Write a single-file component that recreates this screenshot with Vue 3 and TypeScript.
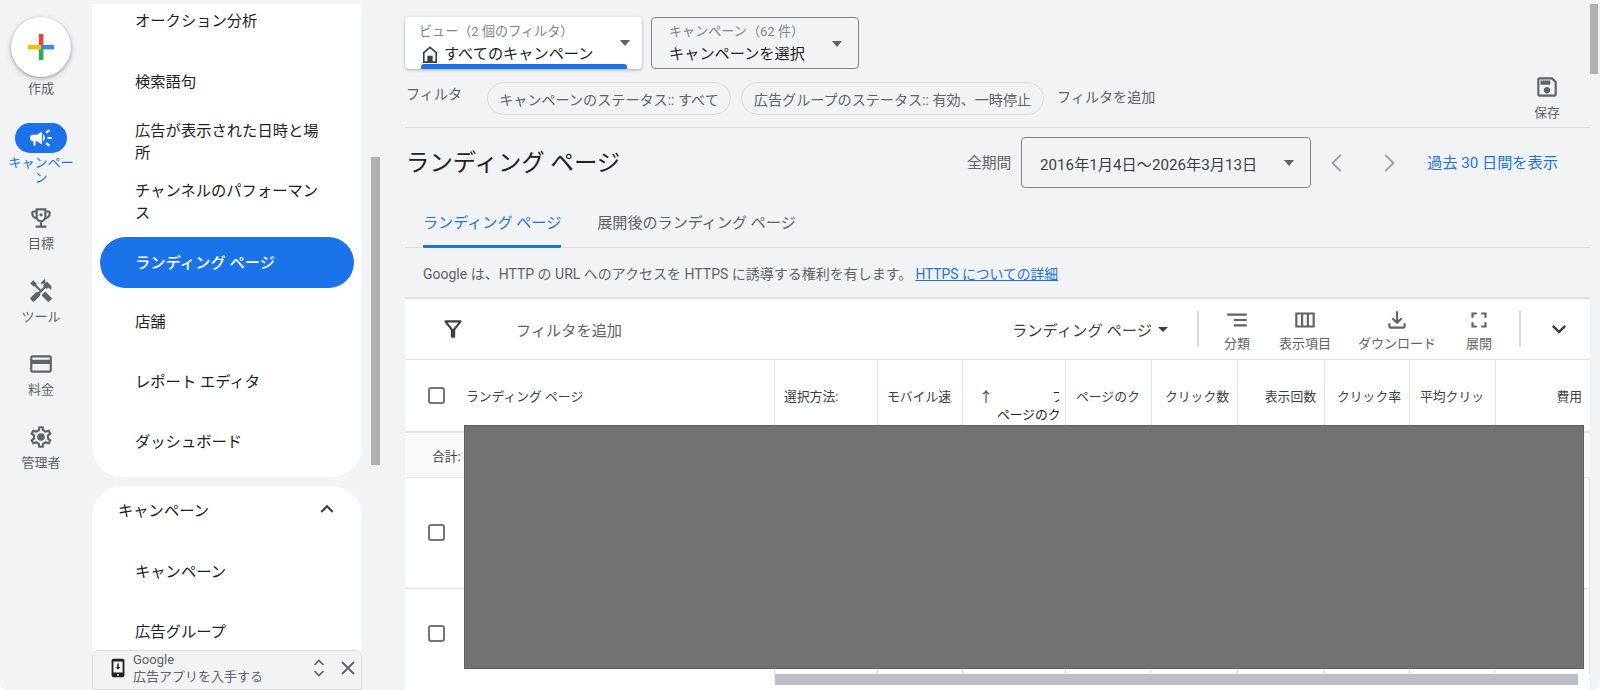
<script setup lang="ts">
interface RailItem { label: string; paths: string[] }
const railItems: RailItem[] = [
  { label: '目標', paths: ['M19 5h-2V3H7v2H5c-1.1 0-2 .9-2 2v1c0 2.55 1.92 4.63 4.39 4.94.63 1.5 1.98 2.63 3.61 2.96V19H7v2h10v-2h-4v-3.1c1.63-.33 2.98-1.46 3.61-2.96C19.08 12.63 21 10.55 21 8V7c0-1.1-.9-2-2-2zM5 8V7h2v3.82C5.84 10.4 5 9.3 5 8zm7 6c-1.65 0-3-1.35-3-3V5h6v6c0 1.65-1.35 3-3 3zm7-6c0 1.3-.84 2.4-2 2.82V7h2v1z', 'M12 7.5a1.5 1.5 0 1 0 0 3 1.5 1.5 0 0 0 0-3z'] },
  { label: 'ツール', paths: ['M21.67 18.17l-5.3-5.3h-.99l-2.54 2.54v.99l5.3 5.3c.39.39 1.02.39 1.41 0l2.12-2.12c.39-.38.39-1.02 0-1.41z', 'M17.34 10.19l1.41-1.41 2.12 2.12c1.17-1.17 1.17-3.07 0-4.24l-3.54-3.54-1.41 1.41V1.71l-.7-.71-3.54 3.54.71.71h2.83l-1.41 1.41 1.06 1.06-2.89 2.89-4.13-4.13V5.06L4.83 2.04 2 4.87 5.03 7.9h1.41l4.13 4.13-.85.85H7.61l-5.3 5.3c-.39.39-.39 1.02 0 1.41l2.12 2.12c.39.39 1.02.39 1.41 0l5.3-5.3v-2.12l5.15-5.15 1.05 1.05z'] },
  { label: '料金', paths: ['M20 4H4c-1.11 0-1.99.89-1.99 2L2 18c0 1.11.89 2 2 2h16c1.11 0 2-.89 2-2V6c0-1.11-.89-2-2-2zm0 14H4v-6h16v6zm0-10H4V6h16v2z'] },
  { label: '管理者', paths: ['M19.43 12.98c.04-.32.07-.64.07-.98 0-.34-.03-.66-.07-.98l2.11-1.65c.19-.15.24-.42.12-.64l-2-3.46c-.09-.16-.26-.25-.44-.25-.06 0-.12.01-.17.03l-2.49 1c-.52-.4-1.08-.73-1.69-.98l-.38-2.65C14.46 2.18 14.25 2 14 2h-4c-.25 0-.46.18-.49.42l-.38 2.65c-.61.25-1.17.59-1.69.98l-2.49-1c-.06-.02-.12-.03-.18-.03-.17 0-.34.09-.43.25l-2 3.46c-.13.22-.07.49.12.64l2.11 1.65c-.04.32-.07.65-.07.98 0 .33.03.66.07.98l-2.11 1.65c-.19.15-.24.42-.12.64l2 3.46c.09.16.26.25.44.25.06 0 .12-.01.17-.03l2.49-1c.52.4 1.08.73 1.69.98l.38 2.65c.03.24.24.42.49.42h4c.25 0 .46-.18.49-.42l.38-2.65c.61-.25 1.17-.59 1.69-.98l2.49 1c.06.02.12.03.18.03.17 0 .34-.09.43-.25l2-3.46c.12-.22.07-.49-.12-.64l-2.11-1.65zm-1.98-1.71c.04.31.05.52.05.73 0 .21-.02.43-.05.73l-.14 1.13.89.7 1.08.84-.7 1.21-1.27-.51-1.04-.42-.9.68c-.43.32-.84.56-1.25.73l-1.06.43-.16 1.13-.2 1.35h-1.4l-.19-1.35-.16-1.13-1.06-.43c-.43-.18-.83-.41-1.23-.71l-.91-.7-1.06.43-1.27.51-.7-1.21 1.08-.84.89-.7-.14-1.13c-.03-.31-.05-.54-.05-.74s.02-.43.05-.73l.14-1.13-.89-.7-1.08-.84.7-1.21 1.27.51 1.04.42.9-.68c.43-.32.84-.56 1.25-.73l1.06-.43.16-1.13.2-1.35h1.39l.19 1.35.16 1.13 1.06.43c.43.18.83.41 1.23.71l.91.7 1.06-.43 1.27-.51.7 1.21-1.07.85-.89.7.14 1.13z', 'M12 8.5a3.5 3.5 0 1 0 0 7 3.5 3.5 0 0 0 0-7z'] },
]
interface NavItem { label: string; active?: boolean }
const navTop: NavItem[] = [
  { label: '検索語句' },
  { label: '広告が表示された日時と場所' },
  { label: 'チャンネルのパフォーマンス' },
  { label: 'ランディング ページ', active: true },
  { label: '店舗' },
  { label: 'レポート エディタ' },
  { label: 'ダッシュボード' },
]
const tools = [
  { label: '分類', cls: 't1', path: 'M9 18h12v-2H9v2zM3 6v2h18V6H3zm6 7h12v-2H9v2z' },
  { label: '表示項目', cls: 't2', path: 'M3 5v14h18V5H3zm5.33 12H5V7h3.33v10zm5.34 0h-3.33V7h3.33v10zM19 17h-3.33V7H19v10z' },
  { label: 'ダウンロード', cls: 't3', path: 'M18 15v3H6v-3H4v3c0 1.1.9 2 2 2h12c1.1 0 2-.9 2-2v-3h-2zm-1-4l-1.41-1.41L13 12.17V4h-2v8.17L8.41 9.59 7 11l5 5 5-5z' },
  { label: '展開', cls: 't4', path: 'M7 14H5v5h5v-2H7v-3zm-2-4h2V7h3V5H5v5zm12 7h-3v2h5v-5h-2v3zM14 5v2h3v3h2V5h-5z' },
]
const numCols: string[] = ['クリック数', '表示回数', 'クリック率']
const rowClasses: string[] = ['row-a', 'row-b']
const emptyCells: number[] = [1, 2, 3, 4, 5, 6, 7, 8, 9]
</script>

<template>
  <div class="page">
    <aside class="rail">
      <button class="fab" aria-label="作成">
        <svg width="26" height="26" viewBox="0 0 26 26">
          <rect x="10.8" y="0" width="4.6" height="13" fill="#ea4335" />
          <rect x="13" y="10.8" width="13" height="4.6" fill="#4285f4" />
          <rect x="10.8" y="13" width="4.6" height="13" fill="#34a853" />
          <rect x="0" y="10.8" width="13" height="4.6" fill="#fbbc04" />
        </svg>
      </button>
      <div class="rail-label create">作成</div>
      <div class="rail-pill">
        <svg width="26" height="26" viewBox="0 0 24 24" fill="#fff"><path d="M18 11v2h4v-2h-4zm-2 6.61c.96.71 2.21 1.65 3.2 2.39.4-.53.8-1.07 1.2-1.6-.99-.74-2.24-1.68-3.2-2.4-.4.54-.8 1.08-1.2 1.61zM20.4 5.6c-.4-.53-.8-1.07-1.2-1.6-.99.74-2.24 1.68-3.2 2.4.4.53.8 1.07 1.2 1.6.96-.72 2.21-1.65 3.2-2.4zM4 9c-1.1 0-2 .9-2 2v2c0 1.1.9 2 2 2h1v4h2v-4h1l5 3V6L8 9H4zm11.5 3c0-1.33-.58-2.53-1.5-3.35v6.69c.92-.81 1.5-2.01 1.5-3.34z" /></svg>
      </div>
      <div class="rail-label active-label">キャンペーン</div>
      <div v-for="item in railItems" :key="item.label" class="rail-item">
        <svg width="26" height="26" viewBox="0 0 24 24" fill="#5f6368"><path v-for="d in item.paths" :key="d" :d="d" /></svg>
        <div class="rail-label">{{ item.label }}</div>
      </div>
    </aside>

    <div class="nav">
      <div class="panel top-panel">
        <div class="nav-item first-item"><span>オークション分析</span></div>
        <div v-for="n in navTop" :key="n.label" class="nav-item" :class="{ active: n.active }">
          <span>{{ n.label }}</span>
        </div>
      </div>
      <div class="panel bottom-panel">
        <div class="group-head">
          <span>キャンペーン</span>
          <svg width="26" height="26" viewBox="0 0 24 24" fill="#3c4043"><path d="M12 8l-6 6 1.41 1.41L12 10.83l4.59 4.58L18 14z" /></svg>
        </div>
        <div class="nav-item"><span>キャンペーン</span></div>
        <div class="nav-item"><span>広告グループ</span></div>
      </div>
      <div class="nav-thumb"></div>
      <div class="app-bar">
        <svg class="phone" width="22" height="22" viewBox="0 0 24 24" fill="#202124"><path d="M17 2H7c-1.1 0-2 .9-2 2v16c0 1.1.9 2 2 2h10c1.1 0 2-.9 2-2V4c0-1.1-.9-2-2-2zm0 15H7V5h10v12zm-5 3.6a1 1 0 1 1 0-2 1 1 0 0 1 0 2zM11.2 7h1.6v4h1.7L12 14l-2.5-3h1.7z" /></svg>
        <div class="app-text"><div>Google</div><div>広告アプリを入手する</div></div>
        <svg class="unfold" width="20" height="24" viewBox="0 0 20 24" fill="none" stroke="#5f6368" stroke-width="1.7"><path d="M5.5 9l4.5-4.5L14.500 9M5.500 15l4.500 4.500 4.500-4.500" /></svg>
        <svg class="close" width="20" height="20" viewBox="0 0 20 20" fill="none" stroke="#5f6368" stroke-width="1.8"><path d="M4 4l12 12M16 4L4 16" /></svg>
      </div>
    </div>

    <main class="main">
      <section class="top">
        <div class="top-left">
          <div class="pickers">
            <div class="picker view-picker">
              <div class="picker-label">ビュー（2 個のフィルタ）</div>
              <div class="picker-value">
                <svg width="16" height="17" viewBox="0 0 18 19" fill="none" stroke="#3c4043" stroke-width="1.9"><path d="M2 18V7.5L9 1.5l7 6V18z" /><path d="M6 18v-7h6v7" fill="#3c4043" stroke="none" /></svg>
                <span>すべてのキャンペーン</span>
              </div>
              <i class="caret picker-caret"></i>
              <div class="view-bar"></div>
            </div>
            <div class="picker camp-picker">
              <div class="picker-label">キャンペーン（62 件）</div>
              <div class="picker-value">キャンペーンを選択</div>
              <i class="caret picker-caret"></i>
            </div>
          </div>
          <div class="filters">
            <span class="filter-title">フィルタ</span>
            <span class="chip chip-a">キャンペーンのステータス:: すべて</span>
            <span class="chip chip-b">広告グループのステータス:: 有効、一時停止</span>
            <span class="add-filter">フィルタを追加</span>
          </div>
        </div>
        <div class="save">
          <svg width="26" height="26" viewBox="0 0 24 24" fill="#5f6368"><path d="M17 3H5c-1.11 0-2 .9-2 2v14c0 1.1.89 2 2 2h14c1.1 0 2-.9 2-2V7l-4-4zm2 16H5V5h11.17L19 7.83V19zm-7-7c-1.66 0-3 1.34-3 3s1.34 3 3 3 3-1.34 3-3-1.34-3-3-3zM6 6h9v4H6z" /></svg>
          <span>保存</span>
        </div>
      </section>

      <section class="title-row">
        <h1>ランディング ページ</h1>
        <span class="period">全期間</span>
        <div class="date-box">
          <span>2016年1月4日〜2026年3月13日</span>
          <i class="caret"></i>
        </div>
        <svg class="arrow arrow-l" width="24" height="24" viewBox="0 0 24 24" fill="#9aa0a6"><path d="M15.4 4.6L14 3.2 5.2 12l8.8 8.8 1.4-1.4L8 12z" /></svg>
        <svg class="arrow arrow-r" width="24" height="24" viewBox="0 0 24 24" fill="#9aa0a6"><path d="M8.6 4.6L10 3.2l8.8 8.8-8.8 8.8-1.4-1.4L16 12z" /></svg>
        <span class="last30">過去 30 日間を表示</span>
      </section>

      <nav class="tabs">
        <span class="tab tab-on">ランディング ページ</span>
        <span class="tab">展開後のランディング ページ</span>
      </nav>

      <p class="notice">
        <span>Google は、HTTP の URL へのアクセスを HTTPS に誘導する権利を有します。</span>
        <a>HTTPS についての詳細</a>
      </p>

      <section class="table-card">
        <div class="toolbar">
          <svg class="funnel" width="26" height="26" viewBox="0 0 24 24" fill="#3c4043"><path d="M7 6h10l-5.01 6.3L7 6zm-2.75-.39C6.27 8.2 10 13 10 13v6c0 .55.45 1 1 1h2c.55 0 1-.45 1-1v-6s3.72-4.8 5.74-7.39c.51-.66.04-1.61-.79-1.61H5.04c-.83 0-1.3.95-.79 1.61z" /></svg>
          <span class="tb-filter">フィルタを追加</span>
          <span class="tb-select">ランディング ページ<i class="caret"></i></span>
          <span class="tb-div"></span>
          <div v-for="t in tools" :key="t.label" class="tool" :class="t.cls">
            <svg width="26" height="26" viewBox="0 0 24 24" fill="#5f6368"><path :d="t.path" /></svg>
            <span>{{ t.label }}</span>
          </div>
          <span class="tb-div second"></span>
          <svg class="tb-chev" width="28" height="28" viewBox="0 0 24 24" fill="#3c4043"><path d="M7.41 8.59L12 13.170l4.590-4.580L18 10l-6 6-6-6z" /></svg>
        </div>

        <div class="grid head">
          <div class="cell first-cell"><span class="check"></span><span>ランディング ページ</span></div>
          <div class="cell">選択方法:</div>
          <div class="cell"><span class="clip clip-m">モバイル速度スコア</span></div>
          <div class="cell sort">
            <div class="sort-top"><span class="up">↑</span><span class="sort-clip">フ</span></div>
            <div class="sort-bottom"><span>ページのクリック</span></div>
          </div>
          <div class="cell"><span class="clip clip-p">ページのクリック</span></div>
          <div v-for="c in numCols" :key="c" class="cell num">{{ c }}</div>
          <div class="cell"><span class="clip clip-a">平均クリック単価</span></div>
          <div class="cell num last-cell">費用</div>
        </div>

        <div class="grid total">
          <div class="cell total-cell">合計:</div>
        </div>

        <div v-for="r in rowClasses" :key="r" class="grid data" :class="r">
          <div class="cell first-cell"><span class="check"></span></div>
          <div v-for="e in emptyCells" :key="e" class="cell"></div>
        </div>
      </section>

      <div class="redaction"></div>
      <div class="h-thumb"></div>
    </main>

    <div class="page-scroll"><div class="page-thumb"></div></div>
  </div>
</template>

<style>
html, body { margin: 0; background: #fff; }
</style>

<style scoped>
* { box-sizing: border-box; }
.page {
  display: flex;
  width: 1600px;
  height: 690px;
  overflow: hidden;
  background: #f1f3f5;
  border-radius: 0 0 8px 8px;
  font-family: Roboto, "Noto Sans CJK JP", sans-serif;
  color: #202124;
}

.rail { width: 92px; flex: none; display: flex; flex-direction: column; align-items: center; padding-top: 17px; padding-right: 10px; }
.fab { width: 60px; height: 60px; flex: none; border: 0; padding: 0; border-radius: 50%; background: #fff; box-shadow: 0 1px 3px rgba(60,64,67,.4), 0 2px 6px rgba(60,64,67,.2); display: flex; align-items: center; justify-content: center; }
.rail-label { font-size: 13px; line-height: 16px; color: #5f6368; text-align: center; }
.create { margin-top: 4px; }
.rail-pill { width: 52px; height: 30px; flex: none; margin-top: 26px; border-radius: 15px; background: #1a73e8; display: flex; align-items: center; justify-content: center; }
.active-label { width: 66px; margin-top: 2px; line-height: 15px; color: #1a73e8; margin-bottom: 20px; }
.rail-item { height: 73px; flex: none; display: flex; flex-direction: column; align-items: center; gap: 5px; }
.rail-item svg { display: block; }

.nav { width: 313px; flex: none; position: relative; }
.panel { width: 270px; background: #fff; overflow: hidden; }
.top-panel { margin-top: 4px; height: 473px; border-radius: 0 0 30px 30px; }
.bottom-panel { margin-top: 9px; height: 204px; border-radius: 30px 30px 0 0; }
.nav-item { height: 60px; padding: 0 36px 0 43px; display: flex; align-items: center; font-size: 15.3px; line-height: 22px; color: #202124; }
.first-item { height: 48px; align-items: flex-start; padding-top: 6px; }
.nav-item.active { height: 51px; margin: 5px 8px 4px; padding: 0 35px; border-radius: 26px; background: #1a73e8; color: #fff; font-weight: 500; }
.group-head { height: 56px; padding: 0 22px 10px 26px; display: flex; align-items: center; justify-content: space-between; font-size: 15.3px; }
.nav-thumb { position: absolute; left: 279px; top: 157px; width: 9px; height: 308px; background: #b0b0b0; }
.app-bar { position: absolute; left: 0; top: 650px; width: 270px; height: 40px; background: #f1f3f4; border: 1px solid #dadce0; border-radius: 6px 6px 0 0; display: flex; align-items: center; font-size: 13px; line-height: 17px; color: #5f6368; padding: 0 0 5px 14px; }
.phone { flex: none; }
.app-text { margin-left: 4px; width: 176px; }
.unfold { flex: none; }
.close { flex: none; margin-left: 9px; }

.main { width: 1185px; flex: none; position: relative; display: flex; flex-direction: column; }
.top { height: 128px; flex: none; border-bottom: 1px solid #dadce0; display: flex; justify-content: space-between; }
.pickers { display: flex; gap: 9px; margin-top: 17px; }
.picker { position: relative; height: 52px; border-radius: 4px; overflow: hidden; }
.view-picker { width: 237px; background: #fff; box-shadow: 0 1px 3px rgba(60,64,67,.4); padding: 6px 0 0 14px; }
.camp-picker { width: 208px; border: 1px solid #80868b; padding: 5px 0 0 17px; }
.picker-label { font-size: 13.1px; line-height: 18px; color: #80868b; }
.picker-value { display: flex; align-items: center; gap: 6px; font-size: 15.2px; line-height: 22px; margin-top: 2px; color: #202124; }
.view-picker .picker-value { margin-left: 3px; }
.caret { display: block; width: 0; height: 0; border-left: 5.5px solid transparent; border-right: 5.5px solid transparent; border-top: 6px solid #5f6368; }
.picker-caret { position: absolute; top: 23px; right: 12px; }
.camp-picker .picker-caret { right: 16px; }
.view-bar { position: absolute; left: 16px; bottom: 0; width: 206px; height: 5px; background: #1a73e8; border-radius: 3px 3px 0 0; }

.filters { display: flex; align-items: flex-start; margin-top: 13px; font-size: 14.1px; color: #5f6368; }
.filter-title { width: 82px; padding-left: 1px; line-height: 24px; }
.chip { height: 33px; border: 1px solid #dadce0; border-radius: 17px; display: flex; align-items: center; justify-content: center; white-space: nowrap; }
.chip-a { width: 244px; }
.chip-b { width: 303px; margin-left: 10px; }
.add-filter { margin-left: 13px; line-height: 30px; color: #5f6368; }
.save { align-self: flex-end; width: 40px; margin-right: 23px; padding-bottom: 6px; display: flex; flex-direction: column; align-items: center; gap: 5px; font-size: 12.8px; line-height: 16px; color: #5f6368; }

.title-row { height: 70px; flex: none; display: flex; align-items: flex-start; }
h1 { margin: 17px 0 0 1px; width: 561px; font-size: 23.4px; line-height: 36px; font-weight: 400; white-space: nowrap; }
.period { margin-top: 25px; width: 54px; font-size: 14.8px; line-height: 20px; color: #5f6368; }
.date-box { margin-top: 9px; width: 290px; height: 51px; border: 1px solid #80868b; border-radius: 4px; display: flex; align-items: center; justify-content: space-between; padding: 0 16px 0 18px; font-size: 15.2px; color: #3c4043; white-space: nowrap; }
.arrow { margin-top: 23px; }
.arrow-l { margin-left: 15px; }
.arrow-r { margin-left: 26px; }
.last30 { margin-left: 27px; margin-top: 25px; font-size: 15.2px; line-height: 20px; color: #1a73e8; white-space: nowrap; }

.tabs { height: 50px; flex: none; border-bottom: 1px solid #dadce0; display: flex; padding-left: 18px; gap: 36px; font-size: 15.1px; color: #5f6368; }
.tab { height: 50px; line-height: 50px; white-space: nowrap; }
.tab-on { color: #1a73e8; border-bottom: 3px solid #1a73e8; border-radius: 0 0 1px 1px; }
.notice { margin: 0; height: 49px; flex: none; display: flex; align-items: center; gap: 3px; padding-left: 18px; font-size: 14px; color: #5f6368; white-space: nowrap; }
.notice a { color: #1a73e8; text-decoration: underline; font-size: 13.8px; }

.table-card { flex: 1; min-height: 0; overflow: hidden; background: #fff; border-top: 2px solid #e0e0e0; }
.toolbar { height: 61px; border-bottom: 1px solid #e0e3e7; display: flex; align-items: center; }
.funnel { margin-left: 35px; flex: none; }
.tb-filter { margin-left: 50px; font-size: 15.2px; color: #5f6368; }
.tb-select { margin-left: auto; display: flex; align-items: center; gap: 6px; font-size: 15.3px; color: #3c4043; }
.tb-select .caret { border-left-width: 5.5px; border-right-width: 5.5px; border-top-width: 5.5px; border-top-color: #3c4043; }
.tb-div { width: 2px; height: 36px; margin-left: 29px; background: #dadce0; flex: none; }
.tb-div.second { margin-left: 20px; }
.tool { flex: none; display: flex; flex-direction: column; align-items: center; gap: 3px; font-size: 13px; line-height: 16px; color: #5f6368; white-space: nowrap; }
.tool svg { display: block; }
.t1 { width: 76px; }
.t2 { width: 60px; }
.t3 { width: 124px; }
.t4 { width: 40px; }
.tb-chev { margin-left: 24px; margin-right: 17px; flex: none; }

.grid { display: grid; grid-template-columns: 370px 103px 85px 103px 86px 86px 87px 85px 86px 94px; }
.cell { border-right: 1px solid #e0e3e7; min-width: 0; overflow: hidden; display: flex; align-items: center; font-size: 12.8px; color: #3c4043; padding: 0 10px; white-space: nowrap; }
.last-cell { border-right: 0; }
.head { height: 73px; border-bottom: 2px solid #e0e3e7; }
.head .cell { padding-bottom: 1px; }
.head .cell:nth-child(2) { padding-left: 9px; }
.first-cell { padding-left: 23px; gap: 21px; }
.num { justify-content: flex-end; padding-right: 8px; }
.clip { display: block; overflow: hidden; }
.clip-m { width: 72px; margin-left: -1px; }
.clip-p { width: 72px; }
.clip-a { width: 73px; }
.sort { flex-direction: column; align-items: stretch; justify-content: flex-start; padding: 27px 6px 0 10px; color: #202124; }
.sort-top { display: flex; justify-content: space-between; line-height: 20px; height: 20px; }
.up { font-size: 14px; color: #3c4043; margin-left: 6px; }
.sort-clip { width: 7px; overflow: hidden; }
.sort-bottom { line-height: 18px; display: flex; justify-content: flex-end; overflow: hidden; margin-top: -1px; }
.sort-bottom span { margin-right: -40px; }
.check { width: 17px; height: 17px; flex: none; border: 2px solid #757575; border-radius: 3px; background: #fff; }
.total { height: 45px; background: #f8f9fa; border-bottom: 1px solid #e0e3e7; }
.total-cell { grid-column: 1 / -1; border-right: 0; padding-left: 27px; }
.data { border-bottom: 1px solid #e0e3e7; }
.row-a { height: 111px; }
.row-a .first-cell { padding-bottom: 2px; }
.row-b { height: 86px; border-bottom: 0; }
.row-b .first-cell { padding-top: 3px; }

.redaction { position: absolute; left: 59px; top: 425px; width: 1120px; height: 244px; background: #727272; border: 1px solid #5f5f5f; }
.h-thumb { position: absolute; left: 370px; top: 674px; width: 803px; height: 11px; background: #bcc0c4; }

.page-scroll { width: 10px; flex: none; padding: 4px 2px 0 0; }
.page-thumb { width: 8px; height: 70px; background: #b0b0b0; }
</style>
